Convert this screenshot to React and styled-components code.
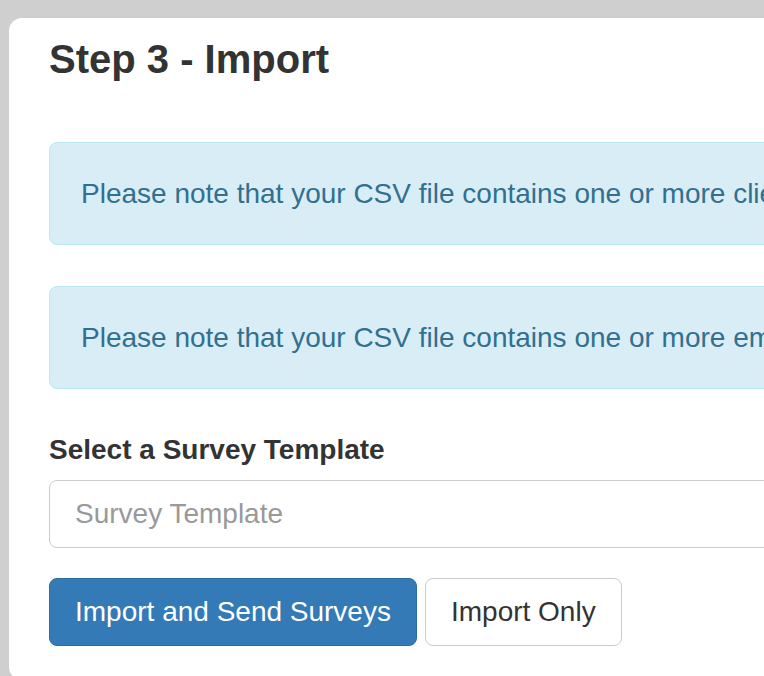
import React from "react";
import styled, { createGlobalStyle } from "styled-components";

const Global = createGlobalStyle`
  html, body {
    margin: 0;
    padding: 0;
    background: #d0cfd0;
    overflow: hidden;
    height: 100%;
  }
  body {
    font-family: "Liberation Sans", Arial, Helvetica, sans-serif;
    color: #333;
  }
  * { box-sizing: border-box; }
`;

const Page = styled.div`
  padding: 18px 0 0 9px;
  width: 1600px;
`;

const Card = styled.div`
  background: #fff;
  border-radius: 13px;
  padding: 19px 40px 0 40px;
  height: 662px;
  width: 1500px;
`;

const Title = styled.h2`
  margin: 0 0 61px 0;
  font-size: 40px;
  line-height: 44px;
  font-weight: 700;
  color: #333;
`;

const Alert = styled.div`
  background: #d9edf7;
  border: 1px solid #bce8f1;
  color: #31708f;
  border-radius: 8px;
  padding: 30px 30px 30px 31px;
  font-size: 28px;
  line-height: 41px;
  margin-bottom: 41px;
  white-space: nowrap;
`;

const FormGroup = styled.div`
  display: flex;
  flex-direction: column;
  margin-bottom: 30px;
`;

const Label = styled.label`
  font-size: 28px;
  line-height: 40px;
  font-weight: 700;
  margin-bottom: 10px;
  color: #333;
`;

const Input = styled.input`
  height: 68px;
  border: 1px solid #ccc;
  border-radius: 8px;
  padding: 0 25px;
  font-size: 28px;
  font-family: "Liberation Sans", Arial, Helvetica, sans-serif;
  color: #555;
  background: #fff;
  outline: none;
  &::placeholder { color: #999; }
`;

const Actions = styled.div`
  display: flex;
  gap: 8px;
`;

const Button = styled.button`
  font-family: "Liberation Sans", Arial, Helvetica, sans-serif;
  font-size: 28px;
  line-height: 40px;
  padding: 13px 25px;
  border-radius: 8px;
  border: 1px solid ${(p) => (p.$primary ? "#2e6da4" : "#ccc")};
  background: ${(p) => (p.$primary ? "#337ab7" : "#fff")};
  color: ${(p) => (p.$primary ? "#fff" : "#333")};
  cursor: pointer;
`;

export default function App() {
  return (
    <>
      <Global />
      <Page>
        <Card>
          <Title>Step 3 - Import</Title>
          <Alert>
            Please note that your CSV file contains one or more clients that already exist and will be updated.
          </Alert>
          <Alert>
            Please note that your CSV file contains one or more emails that are invalid and will be skipped.
          </Alert>
          <FormGroup>
            <Label>Select a Survey Template</Label>
            <Input placeholder="Survey Template" />
          </FormGroup>
          <Actions>
            <Button $primary>Import and Send Surveys</Button>
            <Button>Import Only</Button>
          </Actions>
        </Card>
      </Page>
    </>
  );
}
